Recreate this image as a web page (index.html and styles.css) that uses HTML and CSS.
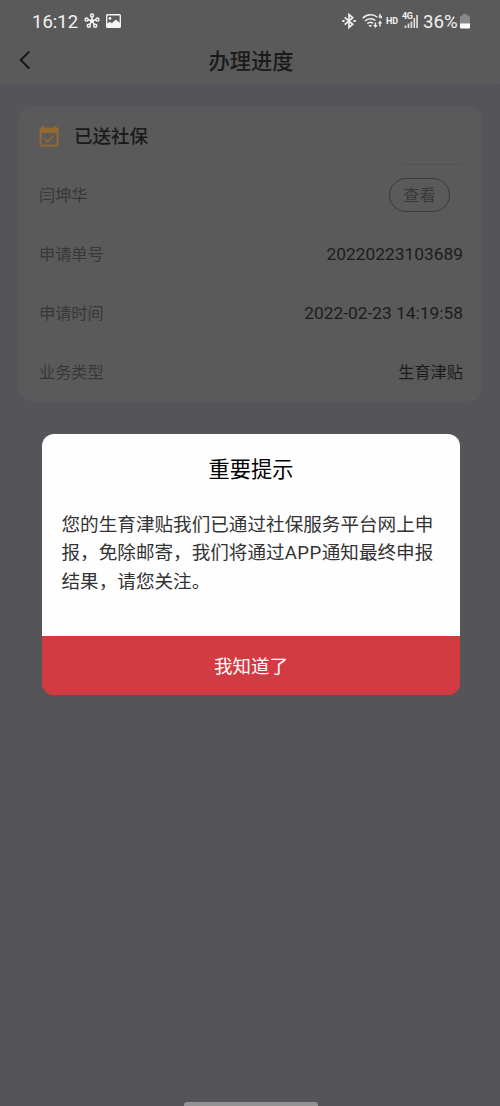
FILE: index.html
```html
<!DOCTYPE html>
<html lang="zh-CN">
<head>
<meta charset="utf-8">
<meta name="viewport" content="width=device-width, initial-scale=1">
<title>办理进度</title>
<link rel="stylesheet" href="styles.css">
</head>
<body>
<div class="screen">
  <div class="top">
    <div class="status">
      <div class="status-left">
        <span class="clock">16:12</span>
        <svg class="hub" width="16" height="16" viewBox="0 0 16 16" fill="none" stroke="#f2f2f2" stroke-width="1.500">
          <path d="M8 8V4M8 8L4 6.8M8 8l4-1.2M8 8l-2.4 3.6M8 8l2.4 3.6"/>
          <circle cx="8" cy="2.600" r="1.500"/><circle cx="2.600" cy="6.400" r="1.500"/><circle cx="13.400" cy="6.400" r="1.500"/><circle cx="4.800" cy="12.800" r="1.500"/><circle cx="11.200" cy="12.800" r="1.500"/><circle cx="8" cy="8" r="1.300" fill="#f2f2f2"/>
        </svg>
        <svg class="photo" width="15" height="14" viewBox="0 0 15 14">
          <path fill="#f4f4f4" fill-rule="evenodd" d="M1.500 0h12A1.500 1.500 0 0 1 15 1.500v11a1.500 1.500 0 0 1-1.500 1.500h-12A1.500 1.500 0 0 1 0 12.500v-11A1.500 1.500 0 0 1 1.500 0zM1.400 1.400v8.100l2.500-1.700 2 1.500 3.800-3.900 3.900 3.300V1.400zM4 3a1.400 1.400 0 1 1 0 2.800 1.400 1.400 0 0 1 0-2.800z"/>
        </svg>
      </div>
      <div class="status-right">
        <svg width="14" height="16" viewBox="0 0 14 16" fill="none" stroke="#f0f0f0" stroke-width="1.700">
          <path d="M2.700 4.300l8 7L7 14.500v-13l3.700 3.200-8 7"/><path d="M0.200 8h2.300M11.500 8h2.300" stroke-width="2"/>
        </svg>
        <svg class="wifi" width="20" height="16" viewBox="0 0 20 16" fill="none" stroke="#eee" stroke-width="1.500">
          <path d="M0.700 5.200C5 0.900 11.500 0.900 15.300 4.200M3 8c3-3 7.500-3 10.300-.5M5.400 10.600c1.600-1.500 4-1.500 5.500-.2"/>
          <path d="M6.300 12h3.800l-1.900 2.200z" fill="#eee" stroke="none"/>
          <path d="M18.600 1c-1.600 1-1.800 4 0 4 1.500 0 1.400-2.200-.8-1.800" stroke-width="1.200"/>
          <path d="M13.400 9.500v4M18 13.500v-4" stroke-width="1.400"/><path d="M11.200 12h4.400l-2.200 3zM15.800 10.600h4.400L18 7.600z" fill="#eee" stroke="none"/>
        </svg>
        <span class="hd">HD</span>
        <div class="cell">
          <svg width="15" height="14" viewBox="0 0 15 14" stroke="#ddd" stroke-width="1.700"><path d="M1.500 14v-2.500M4.500 14V9.500M7.400 14V7.500M10.300 14V4M13.100 14V1"/></svg>
          <span class="gen">4G</span>
        </div>
        <span class="percent">36%</span>
        <svg class="battery" width="10" height="15" viewBox="0 0 10 15"><path fill="#888" d="M3 0h4v1.500h1.500Q10 1.500 10 3v7H0V3q0-1.500 1.500-1.500H3z"/><path fill="#fff" d="M0 9.500h10v4q0 1-1 1H1q-1 0-1-1z"/></svg>
      </div>
    </div>
    <div class="nav">
      <svg class="back" width="12" height="20" viewBox="0 0 12 20" fill="none" stroke="#141414" stroke-width="1.800"><path d="M10.300 1.500L1.700 10l8.600 8.500"/></svg>
      <h1 class="title">办理进度</h1>
    </div>
  </div>

  <div class="card">
    <div class="row head">
      <svg width="20" height="21" viewBox="0 0 20 21" fill="none" stroke="#93692f"><path fill="#93692f" stroke="none" fill-rule="evenodd" d="M2.500 0h2.200v1.500h10.600V0h2.200v1.500h.5q1.500 0 1.500 2v15.500q0 1.500-1.500 1.500H2Q.5 20.500.5 19V3.500q0-2 2-2zM2.500 7v11.700h15V7z"/><path d="M5.800 12.700l2.800 2.800 5.400-5.500" stroke-width="1.600"/></svg>
      <h2 class="state">已送社保</h2>
    </div>
    <div class="row person"><span class="label">闫坤华</span><button class="view">查看</button></div>
    <div class="row"><span class="label">申请单号</span><span class="value">20220223103689</span></div>
    <div class="row"><span class="label">申请时间</span><span class="value">2022-02-23 14:19:58</span></div>
    <div class="row"><span class="label">业务类型</span><span class="value cjk">生育津贴</span></div>
  </div>

  <div class="dialog">
    <h2 class="dialog-title">重要提示</h2>
    <p class="message">您的生育津贴我们已通过社保服务平台网上申<br>报，免除邮寄，我们将通过<span class="latin">APP</span>通知最终申报<br>结果，请您关注。</p>
    <button class="confirm">我知道了</button>
  </div>
  <div class="home-bar"></div>
</div>
</body>
</html>
```
FILE: styles.css
```css
* { box-sizing: border-box; }
body { margin: 0; background: #555459; font-family: Roboto, "Noto Sans CJK SC", sans-serif; }
h1, h2, p { margin: 0; }
button { font: inherit; padding: 0; }
svg { display: block; flex: none; }
.screen { position: relative; height: 1106px; overflow: hidden; background: #555459; }

.top { height: 84px; background: #5a5a5a; box-shadow: 0 1px 3px #575659; }
.status { display: flex; justify-content: space-between; height: 42px; padding: 0 30px 0 32px; color: #f2f2f2; }
.status-left, .status-right { display: flex; align-items: center; }
.clock { font-size: 18.5px; line-height: 42px; width: 46px; margin-right: 6px; padding-top: 1px; }
.photo { margin-left: 6px; }
.wifi { margin-left: 6px; }
.hd { width: 14px; margin-left: 4px; font-size: 9px; font-weight: 700; line-height: 12px; }
.cell { position: relative; width: 17px; height: 16px; margin-left: 2px; padding: 1px 0 0 2px; }
.gen { position: absolute; left: 0; top: -1px; font-size: 9px; line-height: 9px; font-weight: 700; letter-spacing: -0.5px; }
.percent { width: 36px; margin-left: 4px; font-size: 18.7px; line-height: 42px; padding-top: 1px; }
.battery { margin-left: 1px; }

.nav { display: grid; grid-template-columns: 32px 1fr 32px; align-items: center; height: 38px; }
.back { margin: 0 0 2px 19px; }
.title { padding: 1px 0 0 2px; font-size: 21.3px; font-weight: 500; line-height: 32px; text-align: center; color: #1b1b1b; }

.card { width: 463px; height: 294px; margin: 23px 0 0 19px; padding: 0 19px 0 20px; border-radius: 12px; background: #5a5a5a; box-shadow: inset 0 0 6px #5a595f; }
.row { display: flex; align-items: center; justify-content: space-between; height: 59px; }
.head { justify-content: flex-start; gap: 15px; }
.head svg { margin-bottom: 1px; }
.state { font-size: 18.5px; font-weight: 500; line-height: 28px; color: #191919; }
.label { font-size: 16.2px; line-height: 24px; color: #383838; }
.value { padding-bottom: 2px; font-size: 17.35px; line-height: 24px; color: #1c1c1c; }
.value.cjk { padding: 0; font-size: 16.2px; }
.view { width: 61px; height: 34px; margin: 0 13px 1px 0; padding-top: 1px; border: 1.5px solid #3c3b39; border-radius: 17px; background: none; color: #393939; font-size: 16.2px; line-height: 24px; }
.person { position: relative; }
.person::before { content: ""; position: absolute; top: -2px; right: 1px; width: 61px; height: 1px; background: #525252; }

.dialog { position: absolute; left: 42px; top: 434px; width: 418px; height: 261px; display: flex; flex-direction: column; border-radius: 12px; overflow: hidden; background: linear-gradient(#fefefe 220px, #d33b42 220px); }
.dialog-title { padding-top: 20px; font-size: 21.2px; font-weight: 400; line-height: 32px; text-align: center; color: #000; }
.message { padding: 25px 0 0 19.5px; font-size: 18.6px; line-height: 28.4px; color: #333; white-space: nowrap; }
.latin { letter-spacing: 0.5px; }
.confirm { height: 59.5px; margin-top: auto; padding-bottom: 1px; border: 0; background: #d33b42; color: #fff; font-size: 18.5px; }
.home-bar { position: absolute; left: 184px; bottom: 0; width: 134px; height: 4px; border-radius: 3px 3px 0 0; background: #929292; }
```
